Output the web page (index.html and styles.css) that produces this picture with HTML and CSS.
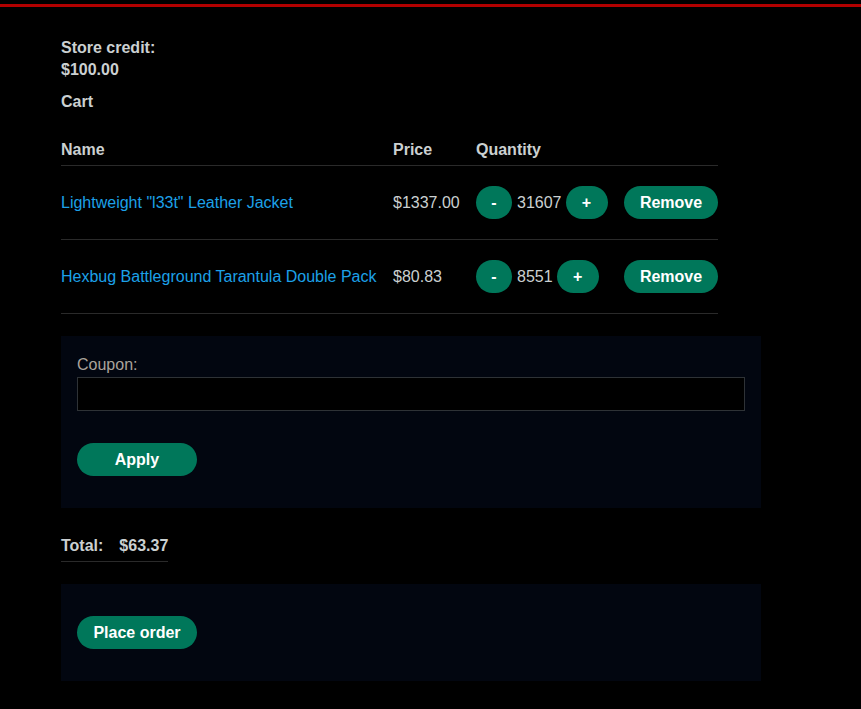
FILE: index.html
```html
<!DOCTYPE html>
<html>
<head>
<meta charset="utf-8">
<link rel="stylesheet" href="styles.css">
</head>
<body>
<div class="topbar"></div>
<main class="page">
  <p class="credit">Store credit:<br>$100.00</p>
  <p class="cart-title">Cart</p>
  <table class="cart">
    <thead>
      <tr><th class="c-name">Name</th><th class="c-price">Price</th><th class="c-qty">Quantity</th><th class="c-rm"></th></tr>
    </thead>
    <tbody>
      <tr>
        <td><a href="#">Lightweight "l33t" Leather Jacket</a></td>
        <td>$1337.00</td>
        <td><div class="qty"><button class="btn minus">-</button><span>31607</span><button class="btn plus">+</button></div></td>
        <td><button class="btn remove">Remove</button></td>
      </tr>
      <tr>
        <td><a href="#">Hexbug Battleground Tarantula Double Pack</a></td>
        <td>$80.83</td>
        <td><div class="qty"><button class="btn minus">-</button><span>8551</span><button class="btn plus">+</button></div></td>
        <td><button class="btn remove">Remove</button></td>
      </tr>
    </tbody>
  </table>
  <form class="panel coupon">
    <label>Coupon:</label>
    <input type="text">
    <button class="btn wide" type="button">Apply</button>
  </form>
  <table class="total">
    <tr><th>Total:</th><th>$63.37</th></tr>
  </table>
  <form class="panel order">
    <button class="btn wide" type="button">Place order</button>
  </form>
</main>
</body>
</html>
```

FILE: styles.css
```css
html, body {
  margin: 0;
  background: #000;
}
body {
  font-family: "Liberation Sans", Arial, sans-serif;
  font-size: 16px;
  color: #cbd0d1;
}
.topbar {
  margin-top: 4px;
  height: 3px;
  background: #b20000;
}
.page {
  padding: 0 61px;
}
.credit {
  margin: 30px 0 0;
  font-weight: bold;
  line-height: 22px;
}
.cart-title {
  margin: 10px 0 0;
  font-weight: bold;
  line-height: 22px;
}
.cart {
  margin-top: 22px;
  border-collapse: collapse;
  table-layout: fixed;
  width: 657px;
}
.cart th {
  text-align: left;
  font-weight: bold;
  height: 30px;
  padding: 0 16px 0 0;
  vertical-align: middle;
  border-bottom: 1px solid #2a2a2a;
}
.cart td {
  height: 73px;
  padding: 0 16px 0 0;
  vertical-align: middle;
  white-space: nowrap;
  border-bottom: 1px solid #2a2a2a;
}
.cart th.c-name { width: 316px; }
.cart th.c-price { width: 67px; }
.cart th.c-qty { width: 132px; }
.cart th.c-rm { width: 94px; }
.cart th:last-child, .cart td:last-child {
  padding-right: 0;
}
.cart a {
  color: #1ca1e8;
  text-decoration: none;
}
.qty {
  display: flex;
  align-items: center;
  gap: 5px;
}
.qty span {
  margin-right: -1px;
}
.btn {
  font-family: "Liberation Sans", Arial, sans-serif;
  font-size: 16px;
  font-weight: bold;
  color: #fff;
  background: #00775a;
  border: none;
  border-radius: 20px;
  height: 33px;
  padding: 0 16px;
  cursor: pointer;
}
.btn.minus {
  width: 36px;
  padding: 0;
}
.btn.plus {
  width: 42px;
  padding: 0;
}
.btn.remove {
  width: 94px;
  padding: 0;
}
.btn.wide {
  min-width: 120px;
}
.panel {
  background: #020610;
  width: 700px;
  box-sizing: border-box;
  padding: 32px 16px;
  margin: 0;
}
.coupon {
  margin-top: 22px;
  padding-top: 20px;
  display: flex;
  flex-direction: column;
  align-items: flex-start;
}
.coupon label {
  color: #aaa39b;
  line-height: 18px;
}
.coupon input {
  margin-top: 3px;
  width: 668px;
  height: 34px;
  box-sizing: border-box;
  background: #000;
  border: 1px solid #2e3236;
  color: #cbd0d1;
}
.coupon .btn {
  margin-top: 32px;
}
.total {
  margin-top: 27px;
  border-collapse: collapse;
}
.total th {
  text-align: left;
  padding: 2px 16px 0 0;
  height: 24px;
  vertical-align: top;
  border-bottom: 1px solid #2a2a2a;
}
.total th:last-child {
  padding-right: 0;
}
.order {
  margin-top: 22px;
}
```
